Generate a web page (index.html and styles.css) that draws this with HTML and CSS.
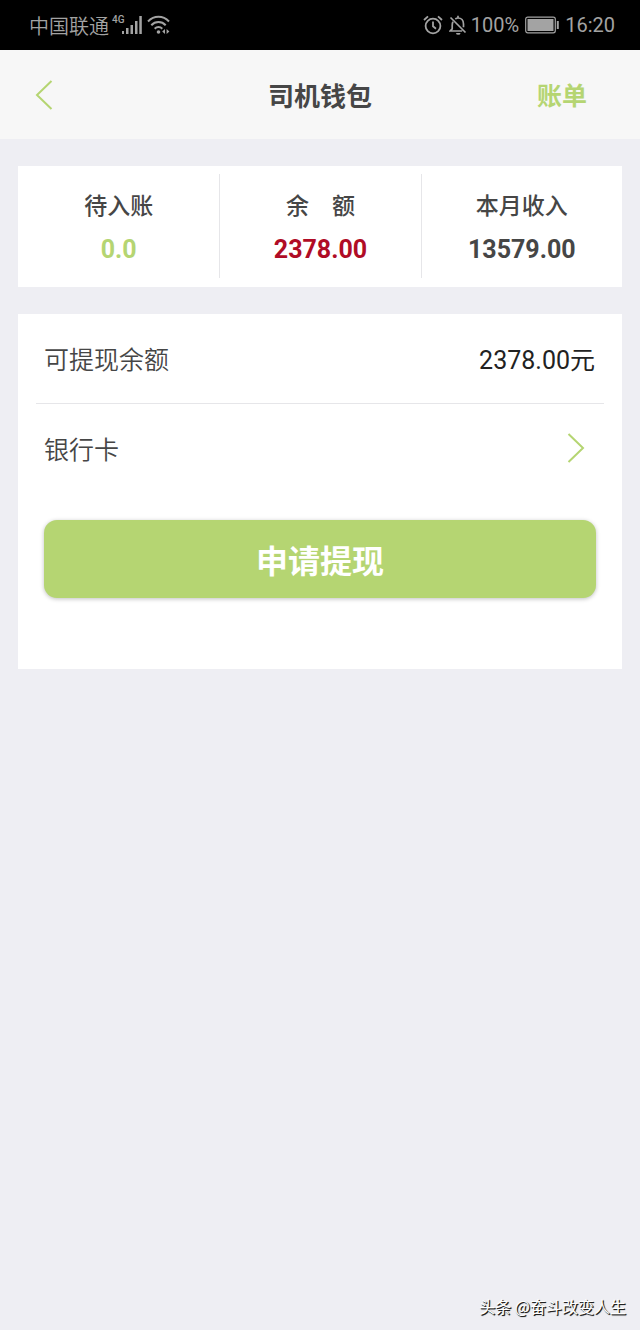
FILE: index.html
```html
<!DOCTYPE html>
<html lang="zh-CN">
<head>
<meta charset="utf-8">
<meta name="viewport" content="width=device-width, initial-scale=1">
<title>司机钱包</title>
<link rel="stylesheet" href="styles.css">
</head>
<body>
<div class="screen">
  <div class="status">
    <div class="status-group">
      <span class="carrier">中国联通</span>
      <span class="network">4G</span>
      <svg class="signal" width="20" height="20" viewBox="0 0 20 20" fill="currentColor" aria-hidden="true">
        <path d="M0 16h2v3H0zM4 13h2.500v6H4zM8.500 10h2.500v9H8.500zM13 6h2.500v13H13zM17.300 1h2.500v18h-2.500z"/>
      </svg>
      <svg class="wifi" width="24" height="20" viewBox="0 0 24 20" fill="none" stroke="currentColor" stroke-width="2" aria-hidden="true">
        <path d="M1 6.500C7 .3 16 .3 22 6.500M4.300 10.200c4-4.200 10.400-4.200 14.400 0M7.700 13.700c2.200-2.300 5.400-2.300 7.600 0"/>
        <circle cx="11.500" cy="17" r="1.800" fill="currentColor" stroke="none"/>
        <path d="M18 14v5l-2.800-2.500zM19.600 14v5l2.800-2.500z" fill="currentColor" stroke="none"/>
      </svg>
    </div>
    <div class="status-group">
      <svg class="alarm" width="20" height="20" viewBox="0 0 20 20" fill="none" stroke="currentColor" stroke-width="1.800" aria-hidden="true">
        <circle cx="10" cy="11" r="7.400"/>
        <path d="M10 6.500v4.800l3 2.400M1 5l4-3.700M19 5l-4-3.700"/>
      </svg>
      <svg class="muted" width="18" height="20" viewBox="0 0 18 20" fill="none" stroke="currentColor" stroke-width="1.700" aria-hidden="true">
        <path d="M1.500 2.500l15 15M4 6.800C3.300 8 3.200 9 3.200 10.500v3.300L1.200 16h12M6.300 4c1-.8 1.700-1 2.700-1 3.300 0 5.500 2.500 5.500 6v3.300M9 3V.8"/>
        <path d="M7 18h4.500a2.200 1.800 0 0 1-4.500 0z" fill="currentColor" stroke="none"/>
      </svg>
      <span>100%</span>
      <svg class="battery" width="34" height="18" viewBox="0 0 34 18" fill="none" stroke="currentColor" aria-hidden="true">
        <rect x=".7" y="1.200" width="29.600" height="15.600" rx="2" stroke-width="1.200"/>
        <rect x="2.500" y="3" width="26" height="12" fill="currentColor" stroke="none"/>
        <path d="M32.800 5v8" stroke-width="2"/>
      </svg>
      <span>16:20</span>
    </div>
  </div>

  <header class="bar">
    <button class="back" type="button" aria-label="返回">
      <svg width="18" height="30" viewBox="0 0 18 30" fill="none" stroke="currentColor" stroke-width="2" aria-hidden="true"><path d="M16.500 1L2 15l14.500 14"/></svg>
    </button>
    <h1 class="title">司机钱包</h1>
    <a class="bill" href="#">账单</a>
  </header>

  <main class="content">
    <section class="card summary">
      <div class="stat"><span class="stat-label">待入账</span><strong class="stat-value pending">0.0</strong></div>
      <div class="stat"><span class="stat-label">余　额</span><strong class="stat-value balance">2378.00</strong></div>
      <div class="stat"><span class="stat-label">本月收入</span><strong class="stat-value">13579.00</strong></div>
    </section>

    <section class="card withdraw">
      <div class="row first"><span>可提现余额</span><span class="amount">2378.00元</span></div>
      <a class="row" href="#"><span>银行卡</span>
        <svg class="next" width="18" height="30" viewBox="0 0 18 30" fill="none" stroke="currentColor" stroke-width="2" aria-hidden="true"><path d="M1.500 1L16 15 1.500 29"/></svg>
      </a>
      <button class="submit" type="button">申请提现</button>
    </section>
  </main>

  <footer class="credit">头条 @奋斗改变人生</footer>
</div>
</body>
</html>
```
FILE: styles.css
```css
* {
  box-sizing: border-box;
}

body {
  margin: 0;
  background: #eeeef3;
  color: #464646;
  font-family: Roboto, "Noto Sans CJK SC", sans-serif;
}

button {
  border: 0;
  font-family: inherit;
  cursor: pointer;
}

a {
  color: inherit;
  text-decoration: none;
}

svg {
  display: block;
  flex: none;
}

.screen {
  display: flex;
  flex-direction: column;
  min-height: 100vh;
}

.status {
  display: flex;
  justify-content: space-between;
  height: 50px;
  padding: 0 25px 0 29px;
  background: #000;
  color: #a3a3a3;
  font-size: 20px;
  line-height: 50px;
}

.status-group {
  display: flex;
  align-items: center;
}

.carrier {
  padding-top: 4px;
  font-weight: 350;
}

.network {
  align-self: flex-start;
  width: 10px;
  margin: 14px 0 0 3px;
  font-size: 10px;
  font-weight: 500;
  line-height: 12px;
}

.wifi {
  margin-left: 5px;
}

.muted {
  margin: 0 4px 0 6px;
}

.battery {
  margin: 0 6px;
}

.bar {
  display: grid;
  grid-template-columns: 80px 1fr 54px;
  align-items: center;
  height: 89px;
  padding: 0 53px 0 27px;
  background: #f7f7f7;
}

.back {
  justify-self: start;
  padding: 8px;
  background: none;
  color: #b5d572;
}

.title {
  margin: 0;
  padding-top: 4px;
  font-size: 26px;
  line-height: 40px;
  text-align: center;
}

.bill {
  justify-self: end;
  padding-top: 4px;
  color: #b5d572;
  font-size: 25px;
  font-weight: 700;
  line-height: 40px;
}

.content {
  display: flex;
  flex: 1;
  flex-direction: column;
  gap: 27px;
  padding: 27px 18px;
}

.card {
  background: #fff;
}

.summary {
  display: grid;
  grid-template-columns: repeat(3, 1fr);
  padding: 8px 0 9px;
}

.stat {
  display: flex;
  flex-direction: column;
  align-items: center;
  gap: 5px;
  padding: 14px 0 9px;
}

.stat + .stat {
  border-left: 1px solid #e6e6e9;
}

.stat-label {
  font-size: 23px;
  font-weight: 500;
  line-height: 38px;
}

.stat-value {
  font-size: 25px;
  line-height: 38px;
}

.pending {
  color: #b5d572;
}

.balance {
  color: #b00c26;
}

.withdraw {
  padding: 0 18px 71px;
}

.row {
  display: flex;
  align-items: center;
  justify-content: space-between;
  height: 90px;
  padding: 0 9px 2px 8px;
  font-size: 25px;
  font-weight: 350;
}

.first {
  border-bottom: 1px solid #e6e6e9;
}

.amount {
  color: #222;
  font-weight: 400;
}

.next {
  margin-right: 10px;
  color: #b5d572;
}

.submit {
  display: block;
  width: calc(100% - 16px);
  height: 78px;
  margin: 26px 8px 0;
  padding: 0;
  border-radius: 13px;
  background: #b5d572;
  box-shadow: 0 1px 4px rgba(0, 0, 0, 0.25);
  color: #fff;
  font-size: 32px;
  font-weight: 700;
}

.credit {
  padding: 0 14px 12px;
  color: #fff;
  font-family: "Noto Sans CJK SC", sans-serif;
  font-size: 16px;
  line-height: 24px;
  text-align: right;
  text-shadow: 1px 1px 1px #222, 1px 1px 0 #222;
}
```
